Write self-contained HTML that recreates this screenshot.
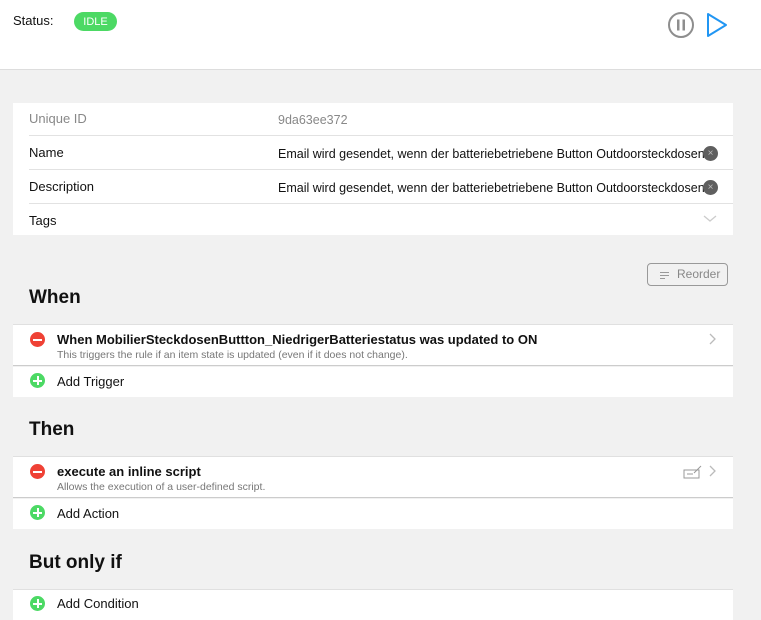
<!DOCTYPE html>
<html><head><meta charset="utf-8"><style>
*{margin:0;padding:0;box-sizing:border-box}
body{width:761px;height:620px;overflow:hidden;background:#f1f1f1;font-family:"Liberation Sans",sans-serif;color:#111;position:relative;font-size:13px}
.a{position:absolute}
.top{left:0;top:0;width:761px;height:70px;background:#fff;border-bottom:1px solid #ddd}
.card{left:13px;width:720px;background:#fff}
.row{position:absolute;left:16px;right:0;border-bottom:1px solid #e2e2e2}
.lbl{position:absolute;left:16px;font-size:13px}
.val{position:absolute;left:265px;font-size:12.5px;white-space:nowrap;overflow:hidden;width:427px}
h2{position:absolute;left:29px;font-size:19px;font-weight:bold}
.ic{position:absolute;left:17px;width:15px;height:15px;border-radius:50%}
.red{background:#ef4135}.grn{background:#4cd964}
.red:after{content:"";position:absolute;left:3px;top:6.5px;width:9px;height:2px;background:#fff}
.grn:before{content:"";position:absolute;left:3px;top:6.5px;width:9px;height:2px;background:#fff}
.grn:after{content:"";position:absolute;left:6.5px;top:3px;width:2px;height:9px;background:#fff}
.t{position:absolute;left:44px;font-size:13px}
.s{position:absolute;left:44px;font-size:10.5px;color:#777}
.x{position:absolute;left:690px;width:15px;height:15px;border-radius:50%;background:#5f5f5f;color:#bbb;font-size:10px;text-align:center;line-height:15px}
</style></head><body>
<div class="a top"></div>
<div class="a" style="left:13px;top:13px;font-size:13px">Status:</div>
<div class="a" style="left:74px;top:12px;width:43px;height:19px;border-radius:10px;background:#4cd964;color:#fff;font-size:11px;text-align:center;line-height:20px">IDLE</div>
<svg class="a" style="left:667px;top:11px" width="62" height="28"><circle cx="14" cy="14" r="12" fill="none" stroke="#8e8e8e" stroke-width="2"/><rect x="10" y="8.5" width="2.5" height="11" fill="#8e8e8e"/><rect x="15.5" y="8.5" width="2.5" height="11" fill="#8e8e8e"/><path d="M41 3 L59 14 L41 25 Z" fill="none" stroke="#2196f3" stroke-width="2" stroke-linejoin="round"/></svg>

<div class="a card" style="top:103px;height:132px">
 <div class="row" style="top:0;height:33px"></div>
 <div class="row" style="top:33px;height:34px"></div>
 <div class="row" style="top:67px;height:34px"></div>
 <div class="lbl" style="top:8px;color:#888">Unique ID</div><div class="val" style="top:10px;color:#888">9da63ee372</div>
 <div class="lbl" style="top:42px">Name</div><div class="val" style="top:44px">Email wird gesendet, wenn der batteriebetriebene Button Outdoorsteckdosen</div>
 <div class="lbl" style="top:76px">Description</div><div class="val" style="top:78px">Email wird gesendet, wenn der batteriebetriebene Button Outdoorsteckdosen</div>
 <div class="lbl" style="top:110px">Tags</div>
 <div class="x" style="top:43px">×</div>
 <div class="x" style="top:77px">×</div>
 <svg class="a" style="left:690px;top:112px" width="14" height="8"><path d="M1 1 L7 6 L13 1" fill="none" stroke="#ccc" stroke-width="1.3"/></svg>
</div>

<div class="a" style="left:647px;top:263px;width:81px;height:23px;border:1px solid #999;border-radius:4px;color:#888;font-size:12px;line-height:21px;padding-left:29px">Reorder</div>
<svg class="a" style="left:660px;top:271px" width="10" height="10"><path d="M0 1.5H9M0 4.5H9M0 7.5H5" stroke="#999" stroke-width="1"/></svg>

<h2 style="top:287px">When</h2>
<div class="a card" style="top:324px;height:42px;border-top:1px solid #e0e0e0;border-bottom:1px solid #ccc">
 <div class="ic red" style="top:7px"></div>
 <div class="t" style="top:7px;font-weight:bold">When MobilierSteckdosenButtton_NiedrigerBatteriestatus was updated to ON</div>
 <div class="s" style="top:24px">This triggers the rule if an item state is updated (even if it does not change).</div>
 <svg class="a" style="left:696px;top:8px" width="8" height="12"><path d="M1 1L6 6L1 11" fill="none" stroke="#bbb" stroke-width="1.3"/></svg>
</div>
<div class="a card" style="top:367px;height:30px">
 <div class="ic grn" style="top:6px"></div><div class="t" style="top:7px">Add Trigger</div>
</div>

<h2 style="top:419px">Then</h2>
<div class="a card" style="top:456px;height:42px;border-top:1px solid #e0e0e0;border-bottom:1px solid #ccc">
 <div class="ic red" style="top:7px"></div>
 <div class="t" style="top:7px;font-weight:bold">execute an inline script</div>
 <div class="s" style="top:24px">Allows the execution of a user-defined script.</div>
 <svg class="a" style="left:670px;top:8px" width="20" height="14"><rect x="1" y="5" width="15" height="8" fill="none" stroke="#999"/><path d="M4 9H10M11 8L18 1" stroke="#999"/></svg>
 <svg class="a" style="left:696px;top:8px" width="8" height="12"><path d="M1 1L6 6L1 11" fill="none" stroke="#bbb" stroke-width="1.3"/></svg>
</div>
<div class="a card" style="top:499px;height:30px">
 <div class="ic grn" style="top:6px"></div><div class="t" style="top:7px">Add Action</div>
</div>

<h2 style="top:552px">But only if</h2>
<div class="a card" style="top:589px;height:31px;border-top:1px solid #e0e0e0">
 <div class="ic grn" style="top:6px"></div><div class="t" style="top:6px">Add Condition</div>
</div>
</body></html>
